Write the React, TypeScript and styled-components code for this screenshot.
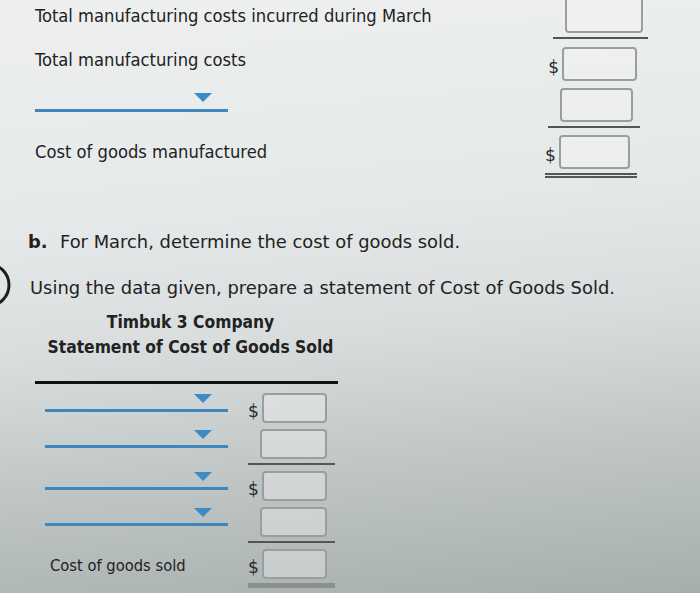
import React from 'react'
import styled, { createGlobalStyle } from 'styled-components'

const GlobalStyle = createGlobalStyle`
  html, body {
    margin: 0;
    padding: 0;
    height: 100%;
  }
  body {
    background: linear-gradient(175deg, #eef0f0 0%, #e6e9e9 35%, #d9dddd 55%, #c1c7c7 75%, #a7aeae 100%);
    overflow: hidden;
    color: #222;
  }
`

const Page = styled.div`
  position: relative;
  width: 700px;
  height: 593px;
  overflow: hidden;
`

const Sheet = styled.div`
  display: flex;
  flex-direction: column;
  margin-top: -4px;
  padding-left: 35px;
`

const SheetRow = styled.div<{ $pad?: number }>`
  display: grid;
  grid-template-columns: 508px 110px;
  align-items: start;
  padding-bottom: ${({ $pad }) => $pad ?? 0}px;
`

const Label = styled.div<{ $nudge?: number }>`
  font-family: 'DejaVu Sans Condensed', 'DejaVu Sans', sans-serif;
  font-stretch: condensed;
  font-size: 18.2px;
  line-height: 34px;
  margin-top: ${({ $nudge }) => $nudge ?? 0}px;
  white-space: nowrap;
`

const Amount = styled.div<{ $width: number; $shift: number }>`
  display: flex;
  flex-direction: column;
  width: ${({ $width }) => $width}px;
  margin-left: ${({ $shift }) => $shift}px;
`

const BoxLine = styled.div<{ $inset: number }>`
  display: flex;
  align-items: center;
  justify-content: flex-end;
  padding-right: ${({ $inset }) => $inset}px;
`

const Dollar = styled.span`
  font-family: 'DejaVu Sans', sans-serif;
  font-size: 17px;
  color: #2a2a2a;
  margin-right: 3px;
  margin-top: 5px;
`

const Box = styled.div<{ $w: number; $h: number }>`
  width: ${({ $w }) => $w}px;
  height: ${({ $h }) => $h}px;
  box-sizing: border-box;
  border: 2px solid #9c9e9e;
  border-radius: 4px;
  background: rgba(245, 247, 247, 0.35);
`

const Rule = styled.div<{ $double?: boolean; $heavy?: boolean }>`
  margin-top: 4px;
  height: ${({ $double, $heavy }) => ($heavy ? 5 : $double ? 5 : 2)}px;
  box-sizing: border-box;
  ${({ $double, $heavy }) =>
    $heavy
      ? 'background: #8a8f8f;'
      : $double
      ? 'border-top: 2px solid #555; border-bottom: 2px solid #555;'
      : 'background: #555;'}
`

const Dropdown = styled.div<{ $width: number; $height: number; $caretTop: number }>`
  position: relative;
  width: ${({ $width }) => $width}px;
  height: ${({ $height }) => $height}px;
  border-bottom: 3px solid #3f86bd;
  box-sizing: content-box;

  &::after {
    content: '';
    position: absolute;
    right: 16px;
    top: ${({ $caretTop }) => $caretTop}px;
    border-left: 9px solid transparent;
    border-right: 9px solid transparent;
    border-top: 9px solid #3a8bc6;
  }
`

const PartB = styled.section`
  position: relative;
  margin-top: 53px;
  font-family: 'DejaVu Sans', Verdana, sans-serif;
  font-size: 17.9px;
`

const Prompt = styled.p<{ $indent: number; $gap: number }>`
  margin: 0 0 ${({ $gap }) => $gap}px 0;
  padding-left: ${({ $indent }) => $indent}px;
  line-height: 22px;
  white-space: nowrap;
`

const Step = styled.b`
  display: inline-block;
  width: 32px;
`

const Marker = styled.svg`
  position: absolute;
  left: -36px;
  top: 30px;
`

const Statement = styled.div`
  margin-left: 35px;
  margin-top: 11px;
  width: 303px;
  display: flex;
  flex-direction: column;
`

const Heading = styled.div`
  font-family: 'DejaVu Sans Condensed', 'DejaVu Sans', sans-serif;
  font-stretch: condensed;
  font-weight: bold;
  font-size: 17.3px;
  line-height: 25px;
  text-align: center;
  padding-left: 8px;
`

const HeadRule = styled.div`
  height: 3px;
  background: #111;
  margin-top: 21px;
  margin-bottom: 9px;
`

const StatementRow = styled.div`
  display: grid;
  grid-template-columns: 183px 87px;
  column-gap: 20px;
  padding-left: 10px;
  align-items: start;
  margin-bottom: 6px;
`

const SmallLabel = styled.div`
  font-family: 'DejaVu Sans Condensed', 'DejaVu Sans', sans-serif;
  font-stretch: condensed;
  font-size: 16.4px;
  line-height: 30px;
  padding-left: 5px;
  margin-top: 2px;
  white-space: nowrap;
`

type RuleKind = 'single' | 'double' | 'heavy'
type CellProps = {
  dollar?: boolean
  rule?: RuleKind
  w: number
  h: number
  width: number
  inset: number
  shift?: number
}

const AmountCell = ({ dollar, rule, w, h, width, inset, shift = 0 }: CellProps) => (
  <Amount $width={width} $shift={shift}>
    <BoxLine $inset={inset}>
      {dollar && <Dollar>$</Dollar>}
      <Box $w={w} $h={h} />
    </BoxLine>
    {rule && <Rule $double={rule === 'double'} $heavy={rule === 'heavy'} />}
  </Amount>
)

const statementRows: { dollar?: boolean; rule?: RuleKind }[] = [
  { dollar: true },
  { rule: 'single' },
  { dollar: true },
  { rule: 'single' }
]

export default function App() {
  return (
    <Page>
      <GlobalStyle />
      <Sheet>
        <SheetRow $pad={8}>
          <Label $nudge={3}>Total manufacturing costs incurred during March</Label>
          <AmountCell rule="single" w={78} h={37} width={95} inset={5} shift={10} />
        </SheetRow>
        <SheetRow $pad={7}>
          <Label $nudge={-4}>Total manufacturing costs</Label>
          <AmountCell dollar w={75} h={34} width={100} inset={6} />
        </SheetRow>
        <SheetRow $pad={7}>
          <Dropdown $width={193} $height={21} $caretTop={5} />
          <AmountCell rule="single" w={73} h={34} width={92} inset={7} shift={5} />
        </SheetRow>
        <SheetRow>
          <Label>Cost of goods manufactured</Label>
          <AmountCell dollar rule="double" w={73} h={34} width={92} inset={7} shift={2} />
        </SheetRow>
      </Sheet>

      <PartB>
        <Marker width="48" height="48" viewBox="0 0 48 48">
          <circle cx="24" cy="24" r="21" fill="none" stroke="#1e1e1e" strokeWidth="3" />
        </Marker>
        <Prompt $indent={28} $gap={24}>
          <Step>b.</Step>For March, determine the cost of goods sold.
        </Prompt>
        <Prompt $indent={30} $gap={0}>
          Using the data given, prepare a statement of Cost of Goods Sold.
        </Prompt>
        <Statement>
          <Heading>Timbuk 3 Company</Heading>
          <Heading>Statement of Cost of Goods Sold</Heading>
          <HeadRule />
          {statementRows.map((r, i) => (
            <StatementRow key={i}>
              <Dropdown $width={183} $height={16} $caretTop={1} />
              <AmountCell dollar={r.dollar} rule={r.rule} w={67} h={30} width={87} inset={8} />
            </StatementRow>
          ))}
          <StatementRow>
            <SmallLabel>Cost of goods sold</SmallLabel>
            <AmountCell dollar rule="heavy" w={67} h={30} width={87} inset={8} />
          </StatementRow>
        </Statement>
      </PartB>
    </Page>
  )
}
